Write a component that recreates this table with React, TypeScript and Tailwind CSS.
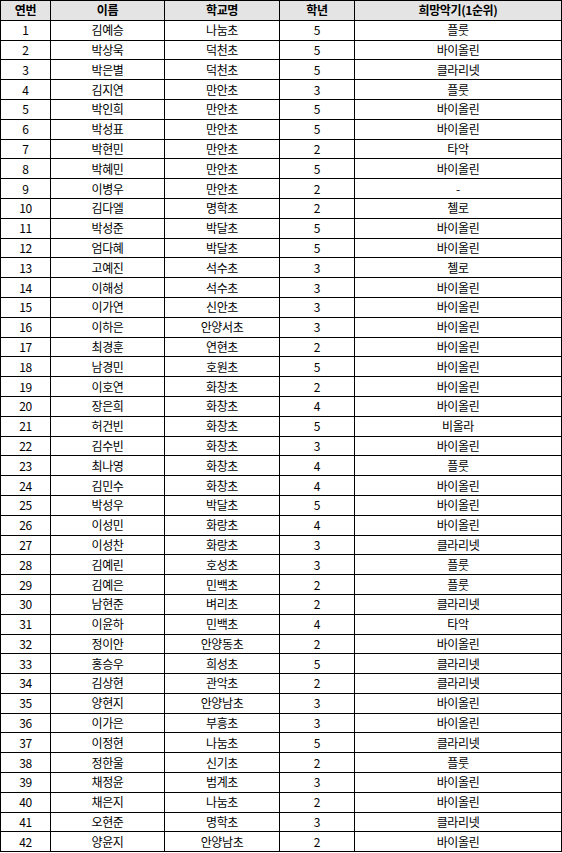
import React from "react";

const rows: [string, string, string, string, string][] = [
  ["1", "김예승", "나눔초", "5", "플룻"],
  ["2", "박상욱", "덕천초", "5", "바이올린"],
  ["3", "박은별", "덕천초", "5", "클라리넷"],
  ["4", "김지연", "만안초", "3", "플룻"],
  ["5", "박인희", "만안초", "5", "바이올린"],
  ["6", "박성표", "만안초", "5", "바이올린"],
  ["7", "박현민", "만안초", "2", "타악"],
  ["8", "박혜민", "만안초", "5", "바이올린"],
  ["9", "이병우", "만안초", "2", "-"],
  ["10", "김다엘", "명학초", "2", "첼로"],
  ["11", "박성준", "박달초", "5", "바이올린"],
  ["12", "엄다혜", "박달초", "5", "바이올린"],
  ["13", "고예진", "석수초", "3", "첼로"],
  ["14", "이해성", "석수초", "3", "바이올린"],
  ["15", "이가연", "신안초", "3", "바이올린"],
  ["16", "이하은", "안양서초", "3", "바이올린"],
  ["17", "최경훈", "연현초", "2", "바이올린"],
  ["18", "남경민", "호원초", "5", "바이올린"],
  ["19", "이호연", "화창초", "2", "바이올린"],
  ["20", "장은희", "화창초", "4", "바이올린"],
  ["21", "허건빈", "화창초", "5", "비올라"],
  ["22", "김수빈", "화창초", "3", "바이올린"],
  ["23", "최나영", "화창초", "4", "플룻"],
  ["24", "김민수", "화창초", "4", "바이올린"],
  ["25", "박성우", "박달초", "5", "바이올린"],
  ["26", "이성민", "화랑초", "4", "바이올린"],
  ["27", "이성찬", "화랑초", "3", "클라리넷"],
  ["28", "김예린", "호성초", "3", "플룻"],
  ["29", "김예은", "민백초", "2", "플룻"],
  ["30", "남현준", "벼리초", "2", "클라리넷"],
  ["31", "이윤하", "민백초", "4", "타악"],
  ["32", "정이안", "안양동초", "2", "바이올린"],
  ["33", "홍승우", "희성초", "5", "클라리넷"],
  ["34", "김상현", "관악초", "2", "클라리넷"],
  ["35", "양현지", "안양남초", "3", "바이올린"],
  ["36", "이가은", "부흥초", "3", "바이올린"],
  ["37", "이정현", "나눔초", "5", "클라리넷"],
  ["38", "정한울", "신기초", "2", "플룻"],
  ["39", "채정윤", "범계초", "3", "바이올린"],
  ["40", "채은지", "나눔초", "2", "바이올린"],
  ["41", "오현준", "명학초", "3", "클라리넷"],
  ["42", "양윤지", "안양남초", "2", "바이올린"],
];

const headers = ["연번", "이름", "학교명", "학년", "희망악기(1순위)"];

export default function App() {
  return (
    <div
      className="w-[562px] h-[853px] bg-white text-black text-[12px] leading-none tracking-[-0.4px]"
      style={{ fontFamily: '"Noto Sans CJK KR", "Noto Sans", sans-serif' }}
    >
      <div className="grid grid-cols-[49px_113px_114px_74px_206px] auto-rows-[18.81px] gap-px p-px bg-black">
        {headers.map((h) => (
          <div
            key={h}
            className="flex items-center justify-center bg-[#e4e4e4] font-bold"
          >
            {h}
          </div>
        ))}
        {rows.map((r) =>
          r.map((c, i) => (
            <div
              key={r[0] + "-" + i}
              className="flex items-center justify-center bg-white"
            >
              {c}
            </div>
          ))
        )}
      </div>
    </div>
  );
}
